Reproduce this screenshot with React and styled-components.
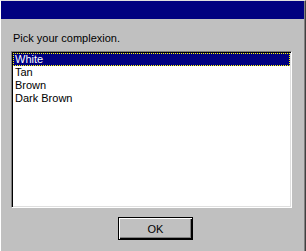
import styled, { createGlobalStyle } from "styled-components";

const GlobalStyle = createGlobalStyle`
  html, body {
    margin: 0;
    padding: 0;
    background: #c0c0c0;
  }
  * {
    box-sizing: border-box;
  }
`;

const DialogWindow = styled.div`
  width: 306px;
  height: 251px;
  background: #c0c0c0;
  border-top: 1px solid #dfdfdf;
  border-left: 1px solid #ffffff;
  border-right: 1px solid #404040;
  box-shadow: inset -1px 0 0 #808080;
  font-family: "Liberation Sans", Arial, sans-serif;
  font-size: 11px;
  color: #000;
  display: flex;
  flex-direction: column;
`;

const TitleBar = styled.div`
  height: 18px;
  margin-right: 1px;
  background: #000080;
`;

const Body = styled.div`
  padding: 12px 0 0 10px;
  display: flex;
  flex-direction: column;
`;

const Prompt = styled.div`
  height: 20px;
  line-height: 14px;
  padding-left: 2px;
`;

const ListBox = styled.div`
  width: 281px;
  height: 157px;
  background: #fff;
  border-top: 1px solid #808080;
  border-left: 1px solid #808080;
  border-right: 1px solid #fff;
  border-bottom: 1px solid #fff;
  box-shadow: inset 1px 1px 0 #000, inset -1px -1px 0 #dfdfdf;
  padding: 1px;
`;

const ListItem = styled.div`
  height: 13px;
  line-height: 13px;
  padding-left: 2px;
  white-space: nowrap;
  background: ${(props) => (props.$selected ? "#000080" : "transparent")};
  color: ${(props) => (props.$selected ? "#fff" : "#000")};
  outline: ${(props) => (props.$selected ? "1px dotted #ffff00" : "none")};
  outline-offset: -1px;
`;

const ButtonRow = styled.div`
  padding: 9px 0 0 107px;
`;

const OkButton = styled.button`
  width: 75px;
  height: 23px;
  padding: 0;
  background: #c0c0c0;
  font-family: "Liberation Sans", Arial, sans-serif;
  font-size: 11px;
  color: #000;
  border: 1px solid #000;
  box-shadow: inset 1px 1px 0 #fff, inset -1px -1px 0 #000,
    inset -2px -2px 0 #808080;
`;

const complexions = ["White", "Tan", "Brown", "Dark Brown"];

export default function App() {
  return (
    <>
      <GlobalStyle />
      <DialogWindow>
        <TitleBar />
        <Body>
          <Prompt>Pick your complexion.</Prompt>
          <ListBox>
            {complexions.map((name, i) => (
              <ListItem key={name} $selected={i === 0}>
                {name}
              </ListItem>
            ))}
          </ListBox>
          <ButtonRow>
            <OkButton>OK</OkButton>
          </ButtonRow>
        </Body>
      </DialogWindow>
    </>
  );
}
